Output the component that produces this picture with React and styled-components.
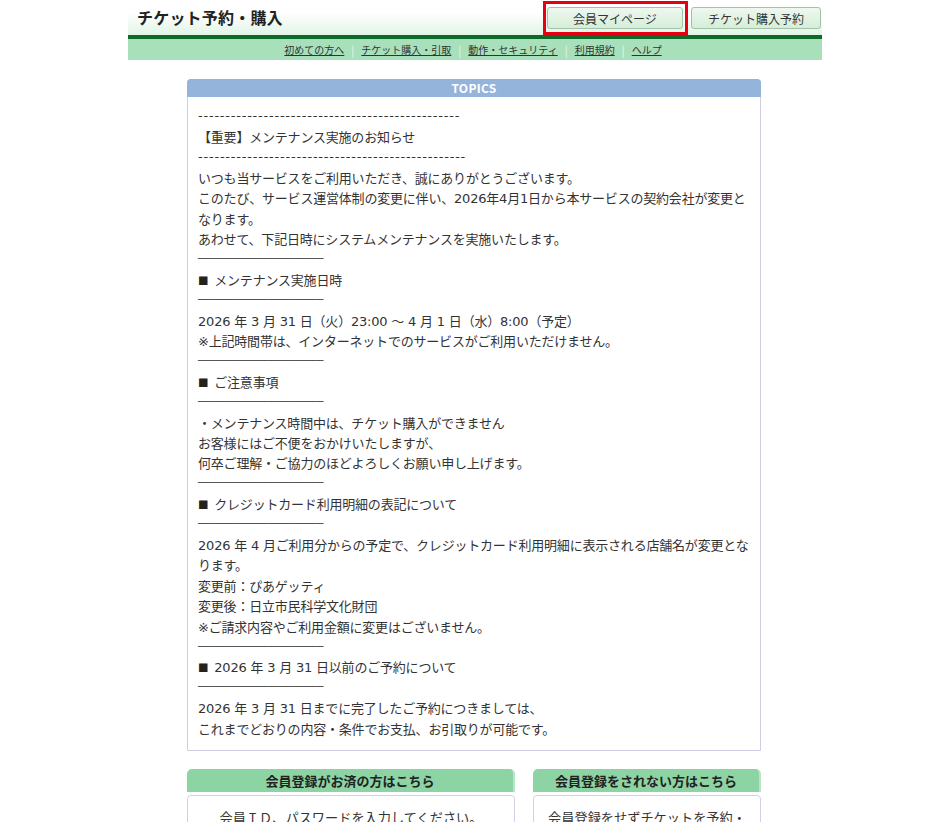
import React from "react";
import styled, { createGlobalStyle } from "styled-components";

const Global = createGlobalStyle`
  html, body { margin: 0; padding: 0; background: #fff; }
  body { font-family: "Noto Sans CJK JP", "Noto Sans", sans-serif; color: #333; }
  * { box-sizing: border-box; }
`;

const Page = styled.div`
  width: 694px;
  margin: 0 auto;
`;

const Header = styled.header`
  height: 35px;
  display: flex;
  align-items: flex-start;
  justify-content: space-between;
  background: linear-gradient(to bottom, #ffffff 0%, #ffffff 35%, #e2f4e6 100%);
  padding: 0 1px 0 9px;
`;

const Title = styled.h1`
  margin: 0;
  font-size: 16px;
  font-weight: bold;
  line-height: 34px;
  color: #222;
  letter-spacing: 0.2px;
`;

const ButtonRow = styled.div`
  display: flex;
  gap: 8px;
  padding-top: 7px;
`;

const HighlightWrap = styled.div`
  position: relative;
`;

const Highlight = styled.span`
  position: absolute;
  left: -4px;
  top: -6px;
  right: -5px;
  bottom: -6px;
  border: 3px solid #e60012;
  pointer-events: none;
`;

const NavButton = styled.a`
  display: flex;
  align-items: center;
  justify-content: center;
  width: ${(p) => p.$w}px;
  height: 22px;
  font-size: 12px;
  color: #333;
  text-decoration: none;
  border: 1px solid #9fc4a6;
  border-radius: 3px;
  background: linear-gradient(to bottom, #eef8ef 0%, #d6eed9 100%);
`;

const GreenRule = styled.div`
  height: 4px;
  background: #0d6a2b;
`;

const SubNav = styled.nav`
  height: 21px;
  background: #a7e0ba;
  display: flex;
  align-items: center;
  justify-content: center;
  font-size: 10px;
  padding-right: 4px;
`;

const SubLink = styled.a`
  color: #333;
  text-decoration: underline;
  text-underline-offset: 1px;
`;

const Sep = styled.span`
  color: #e8f6ec;
  margin: 0 7px;
  font-size: 11px;
`;

const Main = styled.main`
  width: 574px;
  margin: 19px 0 0 calc(50% - 288px);
  padding-bottom: 20px;
`;

const Topics = styled.section`
  border: 1px solid #cfcce3;
  border-radius: 4px 4px 0 0;
`;

const TopicsHead = styled.div`
  height: 18px;
  margin: -1px -1px 0;
  background: #95b4dc;
  border-radius: 4px 4px 0 0;
  color: #fff;
  font-size: 12px;
  font-weight: bold;
  text-align: center;
  line-height: 18px;
  letter-spacing: 0.3px;
`;

const TopicsBody = styled.div`
  padding: 9px 4px 11px 10px;
  font-family: "DejaVu Sans", "Noto Sans CJK JP", sans-serif;
  font-size: 13px;
  line-height: 20.4px;
  letter-spacing: -0.2px;
  color: #333;
`;

const Line = styled.div`
  white-space: ${(p) => (p.$nowrap ? "nowrap" : "normal")};
  letter-spacing: ${(p) => p.$ls || "inherit"};
  position: relative;
  top: ${(p) => (p.$nowrap ? "0" : "1.5px")};
`;

const Rule = styled.div`
  font-family: "DejaVu Sans Mono", monospace;
  font-size: 13px;
  letter-spacing: 0;
  color: #555;
  white-space: nowrap;
`;

const Mark = styled.span`
  font-family: "Noto Sans CJK JP", sans-serif;
  font-size: 10.5px;
  margin-right: 2px;
  color: #222;
`;

const Cards = styled.div`
  display: flex;
  justify-content: space-between;
  margin-top: 18px;
`;

const Card = styled.div`
  width: ${(p) => p.$w}px;
`;

const CardHead = styled.div`
  height: 23px;
  background: #8dd4a5;
  border-radius: 5px 5px 0 0;
  border-right: 2px solid #b9e4c6;
  text-align: center;
  font-size: 13px;
  font-weight: bold;
  line-height: 23px;
  color: #222;
`;

const CardBody = styled.div`
  margin-top: 3px;
  border: 1px solid #d2d0e6;
  border-radius: 4px;
  padding: 12px 10px;
  min-height: 60px;
  text-align: center;
  font-size: 13.2px;
  color: #333;
  line-height: 20px;
`;

const RULE = "────────────────";

const lines = [
  { t: "------------------------------------------------", nowrap: true, ls: "0.77px" },
  { t: "【重要】メンテナンス実施のお知らせ" },
  { t: "-------------------------------------------------", nowrap: true, ls: "0.78px" },
  { t: "いつも当サービスをご利用いただき、誠にありがとうございます。" },
  { t: "このたび、サービス運営体制の変更に伴い、2026年4月1日から本サービスの契約会社が変更となります。" },
  { t: "あわせて、下記日時にシステムメンテナンスを実施いたします。" },
  { rule: true },
  { mark: true, t: " メンテナンス実施日時" },
  { rule: true },
  { t: "2026 年 3 月 31 日（火）23:00 ～ 4 月 1 日（水）8:00（予定）" },
  { t: "※上記時間帯は、インターネットでのサービスがご利用いただけません。" },
  { rule: true },
  { mark: true, t: " ご注意事項" },
  { rule: true },
  { t: "・メンテナンス時間中は、チケット購入ができません" },
  { t: "お客様にはご不便をおかけいたしますが、" },
  { t: "何卒ご理解・ご協力のほどよろしくお願い申し上げます。" },
  { rule: true },
  { mark: true, t: " クレジットカード利用明細の表記について" },
  { rule: true },
  { t: "2026 年 4 月ご利用分からの予定で、クレジットカード利用明細に表示される店舗名が変更となります。" },
  { t: "変更前：ぴあゲッティ" },
  { t: "変更後：日立市民科学文化財団" },
  { t: "※ご請求内容やご利用金額に変更はございません。" },
  { rule: true },
  { mark: true, t: " 2026 年 3 月 31 日以前のご予約について" },
  { rule: true },
  { t: "2026 年 3 月 31 日までに完了したご予約につきましては、" },
  { t: "これまでどおりの内容・条件でお支払、お引取りが可能です。" },
];

const subLinks = ["初めての方へ", "チケット購入・引取", "動作・セキュリティ", "利用規約", "ヘルプ"];

export default function App() {
  return (
    <>
      <Global />
      <Page>
        <Header>
          <Title>チケット予約・購入</Title>
          <ButtonRow>
            <HighlightWrap>
              <NavButton href="#" $w={136}>会員マイページ</NavButton>
              <Highlight />
            </HighlightWrap>
            <NavButton href="#" $w={130}>チケット購入予約</NavButton>
          </ButtonRow>
        </Header>
        <GreenRule />
        <SubNav>
          {subLinks.map((l, i) => (
            <React.Fragment key={l}>
              {i > 0 && <Sep>|</Sep>}
              <SubLink href="#">{l}</SubLink>
            </React.Fragment>
          ))}
        </SubNav>
      </Page>
      <Main>
        <Topics>
          <TopicsHead>TOPICS</TopicsHead>
          <TopicsBody>
            {lines.map((l, i) =>
              l.rule ? (
                <Rule key={i}>{RULE}</Rule>
              ) : (
                <Line key={i} $nowrap={l.nowrap} $ls={l.ls}>
                  {l.mark && <Mark>■</Mark>}
                  {l.t}
                </Line>
              )
            )}
          </TopicsBody>
        </Topics>
        <Cards>
          <Card $w={328}>
            <CardHead>会員登録がお済の方はこちら</CardHead>
            <CardBody>会員ＩＤ、パスワードを入力してください。</CardBody>
          </Card>
          <Card $w={228}>
            <CardHead>会員登録をされない方はこちら</CardHead>
            <CardBody>会員登録をせずチケットを予約・購入される方はこちら</CardBody>
          </Card>
        </Cards>
      </Main>
    </>
  );
}
